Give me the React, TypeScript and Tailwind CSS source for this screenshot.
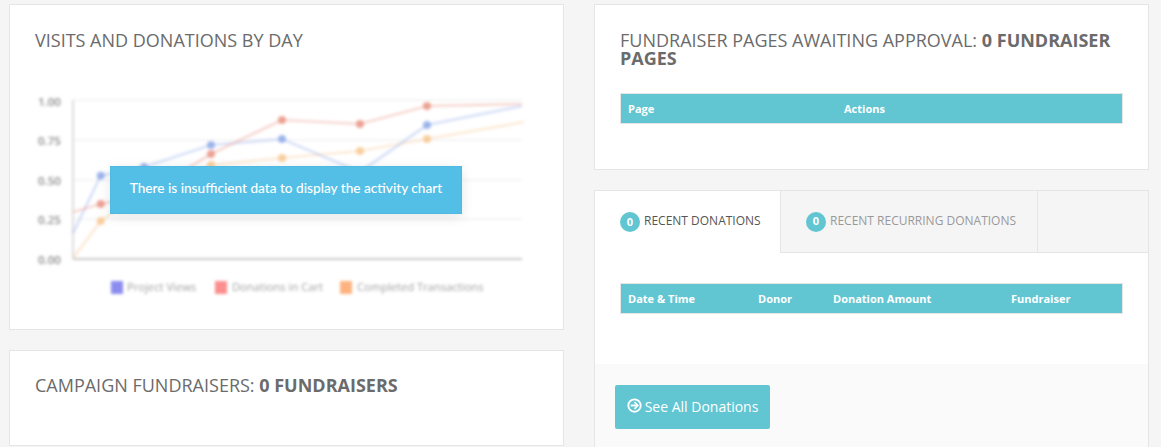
const open = "font-['Open_Sans',sans-serif]";

const blue: [number, number][] = [[73, 233], [100.7, 175.7], [144, 167], [211, 145], [282, 139], [360, 172], [427, 125], [522, 106]];
const red: [number, number][] = [[73, 212], [100.7, 204], [144, 195], [211, 154], [282, 120], [360, 124], [427, 106], [522, 104]];
const orange: [number, number][] = [[73, 258], [100.7, 221], [144, 190], [211, 165], [282, 158], [360, 151], [427, 139], [524, 122]];

function Series({ pts, color }: { pts: [number, number][]; color: string }) {
  return (
    <g>
      <polyline points={pts.map((p) => p.join(",")).join(" ")} fill="none" stroke={color} strokeOpacity={0.42} strokeWidth={2.2} />
      {pts.slice(1, -1).map((p, i) => (
        <circle key={i} cx={p[0]} cy={p[1]} r={4} fill={color} fillOpacity={0.8} />
      ))}
    </g>
  );
}

function Chart() {
  const labels: [string, number][] = [["1.00", 103], ["0.75", 142], ["0.50", 182], ["0.25", 221], ["0.00", 261]];
  return (
    <svg viewBox="10 50 553 279" className="block w-[553px] h-[279px]">
      <defs>
        <filter id="blur" x="-5%" y="-5%" width="110%" height="110%">
          <feGaussianBlur stdDeviation="1.5" />
        </filter>
      </defs>
      <g filter="url(#blur)" fontFamily="'Open Sans', sans-serif" fontSize="11.2">
        {[100, 140, 180, 219].map((y) => (
          <line key={y} x1={73} x2={522} y1={y} y2={y} stroke="#ececec" strokeWidth={1} />
        ))}
        <line x1={73} x2={73} y1={100} y2={259} stroke="#d0d0d0" strokeWidth={1.5} />
        <line x1={73} x2={522} y1={259} y2={259} stroke="#c8c8c8" strokeWidth={2} />
        {labels.map(([t, y]) => (
          <text key={t} x={38} y={y + 3} fontSize={11.5} fill="#8a8a8a" fontWeight={600}>{t}</text>
        ))}
        <Series pts={orange} color="#f8c58c" />
        <Series pts={blue} color="#8aa6e8" />
        <Series pts={red} color="#e8907e" />
        <rect x={111} y={281} width={12} height={13} fill="#8c8cf0" />
        <text x={127} y={291} fill="#a0a0a0">Project Views</text>
        <rect x={215} y={281} width={12} height={13} fill="#fb8f8f" />
        <text x={232} y={291} fill="#a0a0a0">Donations in Cart</text>
        <rect x={340} y={281} width={12} height={13} fill="#fdb380" />
        <text x={357} y={291} fill="#a0a0a0">Completed Transactions</text>
      </g>
    </svg>
  );
}

function Card({ children, className = "" }: { children: React.ReactNode; className?: string }) {
  return <div className={`bg-white border border-[#e5e5e5] shrink-0 ${className}`}>{children}</div>;
}

function Heading({ children }: { children: React.ReactNode }) {
  return <h2 className={`${open} text-[18px] leading-[18px] font-normal uppercase text-[#6b6b6b]`}>{children}</h2>;
}

function THead({ cols }: { cols: [string, string][] }) {
  return (
    <div className="flex h-[31px] items-center bg-[#62c6d2] border border-[#e5e5e5] px-[7px] pt-[1px]">
      {cols.map(([t, w]) => (
        <div key={t} className={`${w} text-[11px] font-bold text-white ${open}`}>{t}</div>
      ))}
    </div>
  );
}

function Badge() {
  return (
    <span className="flex w-[20px] h-[20px] rounded-full bg-[#62c6d2] items-center justify-center text-white text-[11px] font-bold mr-[4px]">0</span>
  );
}

function CircleArrow() {
  return (
    <svg viewBox="0 0 16 16" className="w-[15px] h-[15px] mb-[2px]" fill="none" stroke="currentColor">
      <circle cx="8" cy="8" r="6.6" strokeWidth="2" />
      <path d="M4 8h7" strokeWidth="2" />
      <path d="M8 4.5 11.5 8 8 11.5" strokeWidth="1.8" />
    </svg>
  );
}

export default function App() {
  return (
    <div className={`${open} w-[1161px] h-[447px] overflow-hidden bg-[#f5f5f5] flex pl-[9px] pt-[4px] gap-[30px]`}>
      <div className="w-[555px] flex flex-col gap-[20px] shrink-0">
        <Card className="h-[326px]">
          <div className="pl-[25px] pt-[26px] h-[45px]">
            <Heading>Visits and Donations by Day</Heading>
          </div>
          <div className="relative">
            <Chart />
            <div className="absolute left-[100px] top-[116px] w-[352px] h-[48px] pb-[4px] flex items-center justify-center bg-[#54bfe6] border border-[#4fb9e0] shadow-[0_3px_12px_rgba(0,0,0,0.1)] text-white text-[13.65px] font-medium font-['Lato',sans-serif]">
              There is insufficient data to display the activity chart
            </div>
          </div>
        </Card>
        <Card className="h-[96px] pl-[25px] pt-[25px]">
          <Heading>Campaign Fundraisers: <span className="font-bold">0 Fundraisers</span></Heading>
        </Card>
      </div>
      <div className="w-[555px] flex flex-col gap-[20px] shrink-0">
        <Card className="h-[166px] px-[25px] pt-[26px]">
          <Heading>Fundraiser Pages Awaiting Approval: <span className="font-bold">0 Fundraiser Pages</span></Heading>
          <div className="mt-[26px]">
            <THead cols={[["Page", "w-[216px]"], ["Actions", "flex-1"]]} />
          </div>
        </Card>
        <Card className="h-[400px] flex flex-col">
          <div className="flex h-[62px] bg-[#f5f5f5] border-b border-[#e5e5e5]">
            <div className="w-[186px] h-[62px] bg-white border-r border-[#e5e5e5] pl-[25px] flex items-center text-[12px] text-[#555555]">
              <Badge />
              <span className="mb-[2px]">RECENT DONATIONS</span>
            </div>
            <div className="w-[257px] border-r border-[#e5e5e5] pl-[25px] flex items-center text-[12px] text-[#999999]">
              <Badge />
              <span className="mb-[2px]">RECENT RECURRING DONATIONS</span>
            </div>
          </div>
          <div className="h-[111px] px-[25px] pt-[30px]">
            <THead cols={[["Date & Time", "w-[130px]"], ["Donor", "w-[75px]"], ["Donation Amount", "w-[178px]"], ["Fundraiser", "flex-1"]]} />
          </div>
          <div className="flex-1 bg-[#fafafa] pl-[20px] pt-[21px]">
            <button className="flex items-center justify-center w-[155px] h-[44px] pb-[1px] bg-[#62c6d2] rounded-[2px] text-white text-[14px] gap-[3px]">
              <CircleArrow />
              See All Donations
            </button>
          </div>
        </Card>
      </div>
    </div>
  );
}
